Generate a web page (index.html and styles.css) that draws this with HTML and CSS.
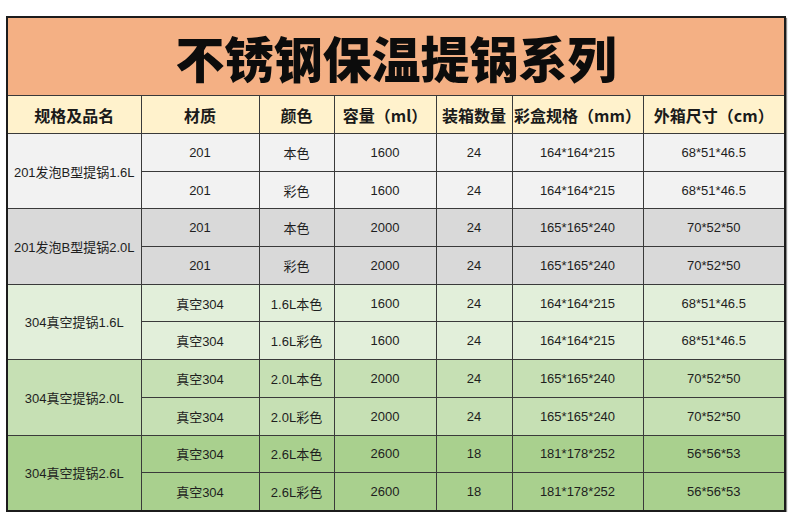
FILE: index.html
```html
<!DOCTYPE html>
<html lang="zh-CN">
<head>
<meta charset="utf-8">
<title>不锈钢保温提锅系列</title>
<link rel="stylesheet" href="styles.css">
</head>
<body>
<div class="page">
<table class="sheet">
  <colgroup>
    <col class="c1"><col class="c2"><col class="c3"><col class="c4"><col class="c5"><col class="c6"><col class="c7">
  </colgroup>
  <thead>
    <tr class="title-row"><th colspan="7" class="title">不锈钢保温提锅系列</th></tr>
    <tr class="head-row">
      <th>规格及品名</th><th>材质</th><th>颜色</th><th>容量（ml）</th><th>装箱数量</th><th>彩盒规格（mm）</th><th>外箱尺寸（cm）</th>
    </tr>
  </thead>
  <tbody>
    <tr class="g1"><td rowspan="2">201发泡B型提锅1.6L</td><td>201</td><td>本色</td><td>1600</td><td>24</td><td>164*164*215</td><td>68*51*46.5</td></tr>
    <tr class="g1"><td>201</td><td>彩色</td><td>1600</td><td>24</td><td>164*164*215</td><td>68*51*46.5</td></tr>
    <tr class="g2"><td rowspan="2">201发泡B型提锅2.0L</td><td>201</td><td>本色</td><td>2000</td><td>24</td><td>165*165*240</td><td>70*52*50</td></tr>
    <tr class="g2"><td>201</td><td>彩色</td><td>2000</td><td>24</td><td>165*165*240</td><td>70*52*50</td></tr>
    <tr class="g3"><td rowspan="2">304真空提锅1.6L</td><td>真空304</td><td>1.6L本色</td><td>1600</td><td>24</td><td>164*164*215</td><td>68*51*46.5</td></tr>
    <tr class="g3"><td>真空304</td><td>1.6L彩色</td><td>1600</td><td>24</td><td>164*164*215</td><td>68*51*46.5</td></tr>
    <tr class="g4"><td rowspan="2">304真空提锅2.0L</td><td>真空304</td><td>2.0L本色</td><td>2000</td><td>24</td><td>165*165*240</td><td>70*52*50</td></tr>
    <tr class="g4"><td>真空304</td><td>2.0L彩色</td><td>2000</td><td>24</td><td>165*165*240</td><td>70*52*50</td></tr>
    <tr class="g5"><td rowspan="2">304真空提锅2.6L</td><td>真空304</td><td>2.6L本色</td><td>2600</td><td>18</td><td>181*178*252</td><td>56*56*53</td></tr>
    <tr class="g5"><td>真空304</td><td>2.6L彩色</td><td>2600</td><td>18</td><td>181*178*252</td><td>56*56*53</td></tr>
  </tbody>
</table>
</div>
</body>
</html>
```

FILE: styles.css
```css
html, body {
  margin: 0;
  padding: 0;
  background: #ffffff;
}

.page {
  padding: 16px 0 0 6px;
}

.sheet {
  width: 778px;
  table-layout: fixed;
  border-collapse: collapse;
  border: 2px solid #1c1c1c;
  box-shadow: 1px 2px 1px rgba(0, 0, 0, 0.45);
  font-family: "Liberation Sans", "Noto Sans CJK SC", sans-serif;
  color: #1e1e1e;
}

.c1 { width: 134px; }
.c2 { width: 118px; }
.c3 { width: 75px; }
.c4 { width: 102px; }
.c5 { width: 76px; }
.c6 { width: 131px; }
.c7 { width: 142px; }

.sheet th,
.sheet td {
  border: 1px solid #3a3a3a;
  padding: 0;
  text-align: center;
  vertical-align: middle;
  white-space: nowrap;
  overflow: hidden;
}

.title-row .title {
  height: 77px;
  background: #f4b084;
  font-family: "Noto Sans CJK SC", sans-serif;
  font-weight: 900;
  font-size: 49px;
  line-height: 1;
  color: #0c0c0c;
  letter-spacing: 0;
}

.head-row th {
  height: 37px;
  background: #fff2cc;
  font-family: "Noto Sans CJK SC", sans-serif;
  font-weight: 700;
  font-size: 16px;
  color: #1a1a1a;
}

.sheet td {
  height: 36.7px;
  font-size: 13px;
}

.g1 td { background: #f2f2f2; }
.g2 td { background: #d9d9d9; }
.g3 td { background: #e2efda; }
.g4 td { background: #c6e0b4; }
.g5 td { background: #a9d08e; }
```
